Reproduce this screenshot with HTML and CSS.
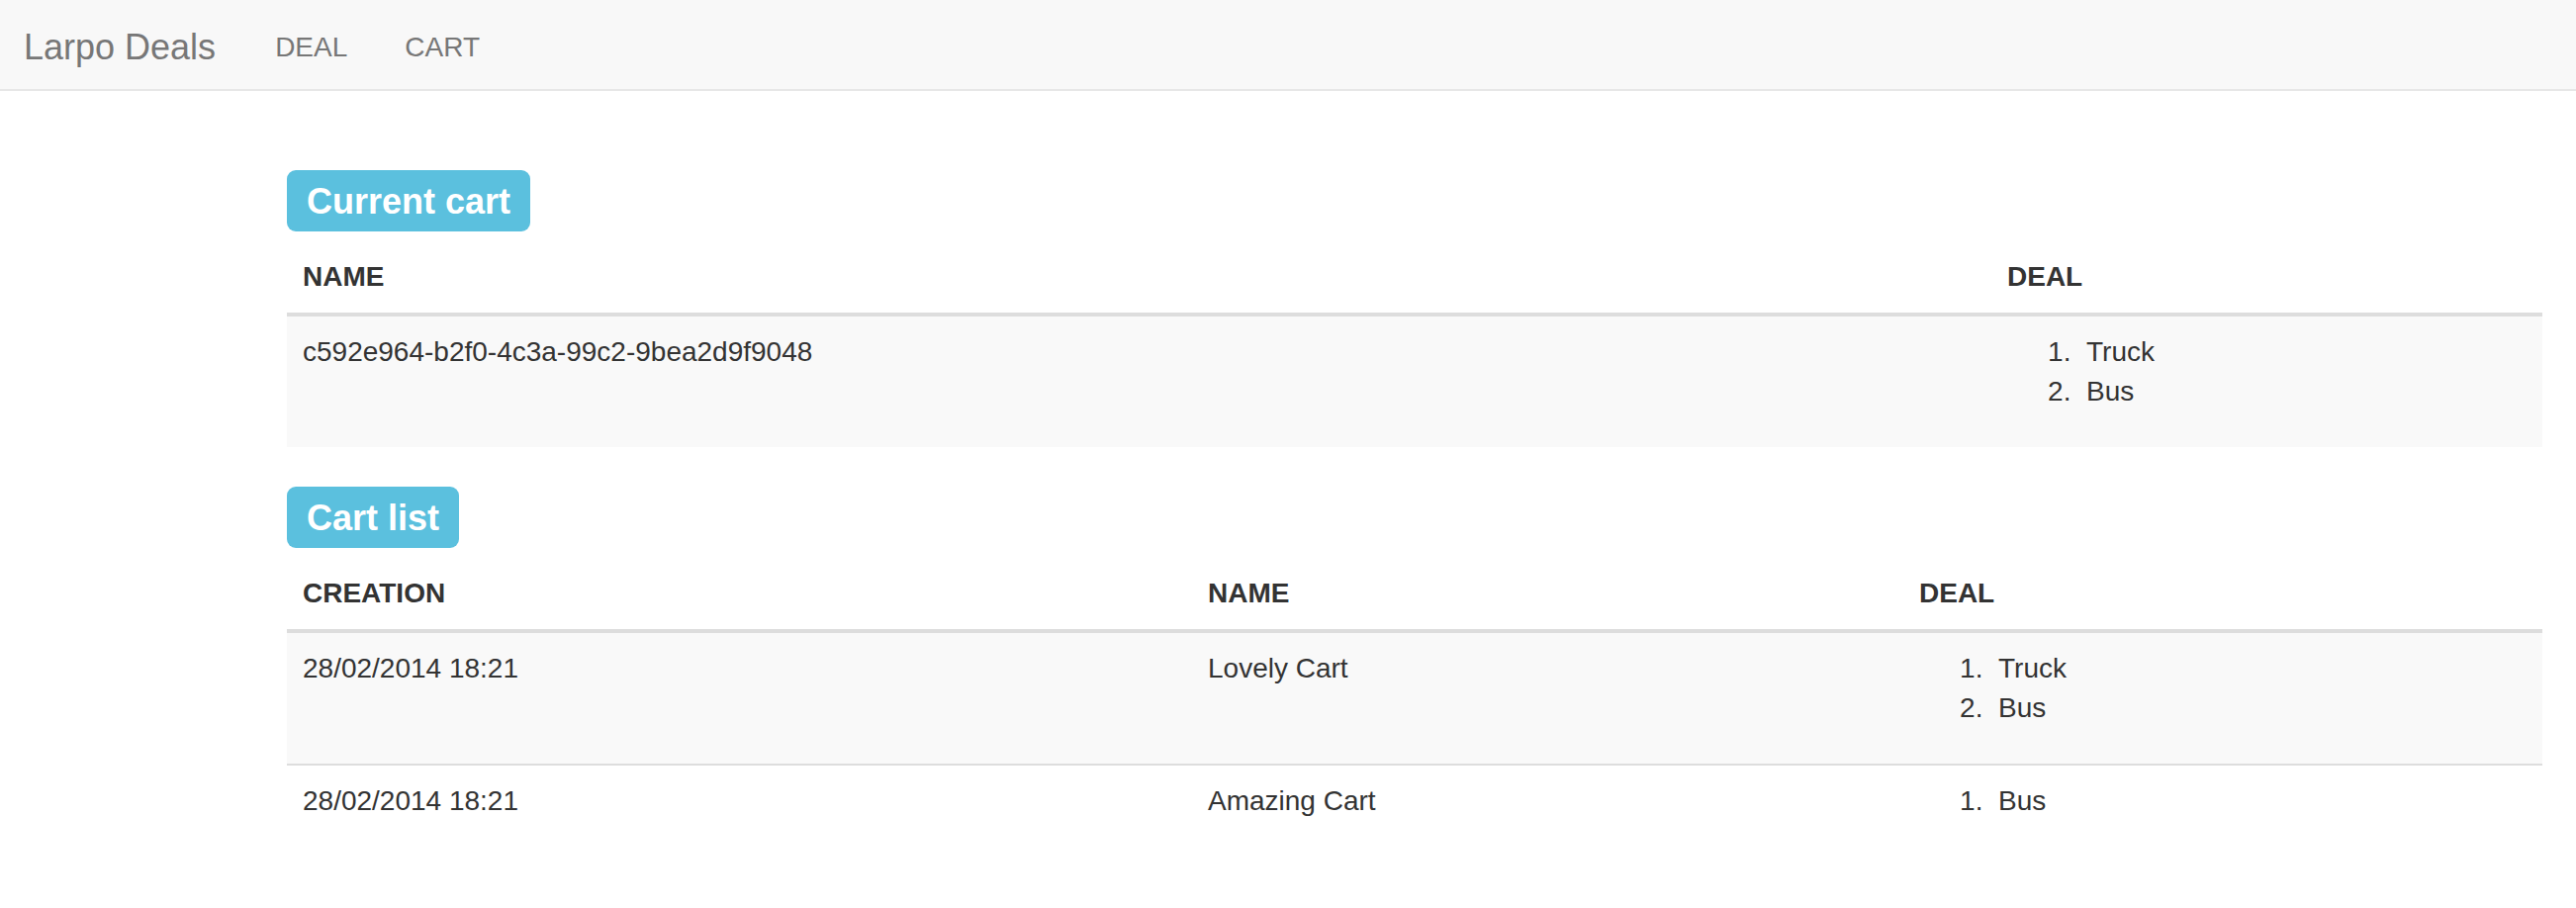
FILE: index.html
```html
<!DOCTYPE html>
<html lang="en">
<head>
<meta charset="utf-8">
<title>Larpo Deals</title>
<link rel="stylesheet" href="styles.css">
</head>
<body>
<nav class="navbar">
  <a class="brand" href="#">Larpo Deals</a>
  <ul class="nav">
    <li><a href="#">DEAL</a></li>
    <li><a href="#">CART</a></li>
  </ul>
</nav>

<main class="container">
  <div class="section-title"><span class="label">Current cart</span></div>
  <table class="table">
    <thead>
      <tr>
        <th class="c1-name">NAME</th>
        <th class="c1-deal">DEAL</th>
      </tr>
    </thead>
    <tbody>
      <tr class="odd">
        <td>c592e964-b2f0-4c3a-99c2-9bea2d9f9048</td>
        <td><ol><li>Truck</li><li>Bus</li></ol></td>
      </tr>
    </tbody>
  </table>

  <div class="section-title"><span class="label">Cart list</span></div>
  <table class="table">
    <thead>
      <tr>
        <th class="c2-creation">CREATION</th>
        <th class="c2-name">NAME</th>
        <th class="c2-deal">DEAL</th>
      </tr>
    </thead>
    <tbody>
      <tr class="odd">
        <td>28/02/2014 18:21</td>
        <td>Lovely Cart</td>
        <td><ol><li>Truck</li><li>Bus</li></ol></td>
      </tr>
      <tr class="next">
        <td>28/02/2014 18:21</td>
        <td>Amazing Cart</td>
        <td><ol><li>Bus</li></ol></td>
      </tr>
    </tbody>
  </table>
</main>
</body>
</html>
```

FILE: styles.css
```css
html, body {
  margin: 0;
  padding: 0;
  background: #fff;
}

body {
  font-family: "Liberation Sans", Arial, sans-serif;
  font-size: 28px;
  line-height: 40px;
  color: #333;
}

a {
  text-decoration: none;
}

/* Navbar */
.navbar {
  display: flex;
  align-items: flex-start;
  height: 62px;
  padding: 28px 0 0 24px;
  background: #f8f8f8;
  border-bottom: 2px solid #e7e7e7;
}

.brand {
  font-size: 36px;
  line-height: 40px;
  color: #777;
  margin-right: 31px;
}

.nav {
  display: flex;
  list-style: none;
  margin: 0;
  padding: 0;
}

.nav a {
  display: block;
  padding: 0 29px;
  font-size: 28px;
  line-height: 40px;
  color: #777;
}

/* Content */
.container {
  width: 2280px;
  margin: 80px 0 0 290px;
}

.section-title {
  display: flex;
  margin-bottom: 10px;
}

.label {
  display: block;
  font-size: 36px;
  line-height: 36px;
  font-weight: bold;
  color: #fff;
  background: #5bc0de;
  padding: 14px 20px 12px;
  border-radius: 9px;
}

.table {
  width: 100%;
  table-layout: fixed;
  border-collapse: separate;
  border-spacing: 0;
  margin-bottom: 40px;
}

.table th {
  text-align: left;
  font-weight: bold;
  padding: 16px;
  line-height: 40px;
  vertical-align: bottom;
  border-bottom: 4px solid #ddd;
}

.table td {
  padding: 16px;
  line-height: 40px;
  vertical-align: top;
}

.table tr.odd td {
  background: #f9f9f9;
}

.table tr.next td {
  border-top: 2px solid #ddd;
}

.table ol {
  margin: 0 0 20px 0;
  padding-left: 80px;
}

.table li::marker {
  content: counter(list-item) ".\00a0\00a0";
}

.c1-name { width: 1691px; }
.c1-deal { width: 525px; }

.c2-creation { width: 883px; }
.c2-name { width: 687px; }
.c2-deal { width: 614px; }
```
